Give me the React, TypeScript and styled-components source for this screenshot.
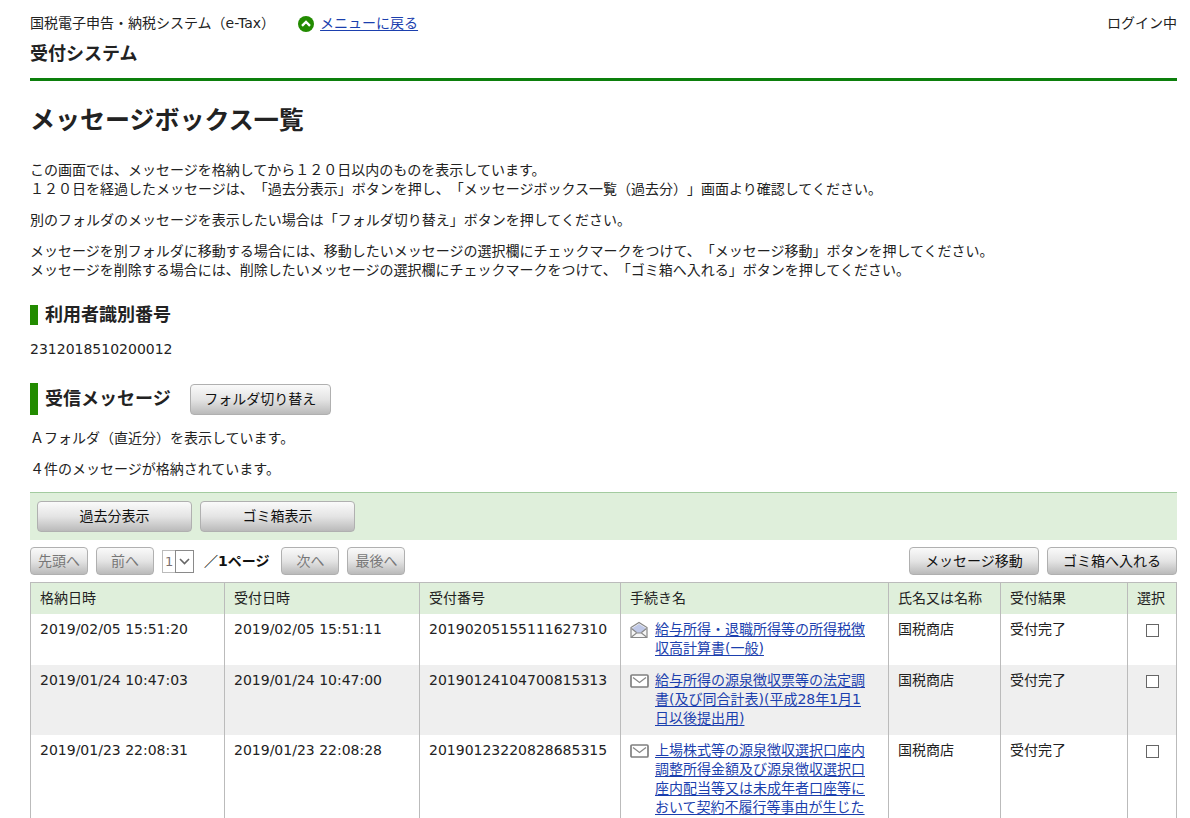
import React from "react";
import styled, { createGlobalStyle } from "styled-components";

const GlobalStyle = createGlobalStyle`
  *, *::before, *::after { box-sizing: border-box; }
  body {
    margin: 0;
    background: #fff;
    color: #222;
    font-family: "DejaVu Sans", "Noto Sans CJK JP", sans-serif;
    font-size: 14px;
    line-height: 19px;
    text-spacing-trim: space-all;
  }
  button, input, select { font: inherit; margin: 0; }
  h1, h2, p { margin: 0; }
`;

const Page = styled.div`
  padding: 14px 13px 0 30px;
`;

const Header = styled.header`
  border-bottom: 3px solid #0c7f0c;
  padding-bottom: 12px;
`;

const HeaderTop = styled.div`
  display: flex;
  align-items: center;
  gap: 23px;
  margin-bottom: 9px;
`;

const LoginState = styled.span`
  margin-left: auto;
`;

const Link = styled.a`
  color: #1b3fae;
  text-decoration: underline;
  text-underline-offset: 2px;
`;

const MenuLink = styled(Link)`
  display: flex;
  align-items: center;
  gap: 6px;
`;

const SystemName = styled.p`
  font-size: 18px;
  line-height: 24px;
  font-weight: bold;
`;

const Title = styled.h1`
  margin: 22px 0;
  font-size: 25px;
  line-height: 36px;
`;

const Paragraph = styled.p`
  margin-bottom: 12px;
`;

const SectionHead = styled.div<{ $tall?: boolean }>`
  display: flex;
  align-items: center;
  gap: 19px;
  min-height: ${(p) => (p.$tall ? 32 : 20)}px;
  padding-left: 7px;
  border-left: 8px solid #228b00;
  margin: ${(p) => (p.$tall ? "24px 0 14px" : "25px 0 15px")};
`;

const SectionTitle = styled.h2`
  font-size: 18px;
  line-height: 20px;
`;

const Button = styled.button<{ $size: "wide" | "folder" | "action" | "pager" }>`
  width: ${(p) => ({ wide: 155, folder: 141, action: 130, pager: 58 })[p.$size]}px;
  height: ${(p) => (p.$size === "wide" || p.$size === "folder" ? 31 : 28)}px;
  padding: 0;
  border: 1px solid #b0b0b0;
  border-radius: 4px;
  background: linear-gradient(#fafafa, #e4e4e4 50%, #bababa);
  color: #111;
  white-space: nowrap;

  &:disabled { color: #777; }
`;

const FolderBar = styled.div`
  display: flex;
  gap: 8px;
  padding: 8px 7px;
  margin-top: 13px;
  border-top: 1px solid #a3cba0;
  background: #dfefdb;
`;

const Toolbar = styled.div`
  display: flex;
  align-items: center;
  justify-content: space-between;
  padding: 7px 0;
`;

const Group = styled.div`
  display: flex;
  align-items: center;
  gap: 8px;
`;

const PageLabel = styled.label`
  display: flex;
  align-items: center;
  gap: 10px;
  margin-right: 4px;
  font-weight: bold;
  color: #111;
`;

const SelectBox = styled.span`
  position: relative;
  display: block;
  width: 32px;
  height: 23px;
`;

const PageSelect = styled.select`
  appearance: none;
  width: 100%;
  height: 100%;
  padding: 0 0 0 2px;
  border: 1px solid #bbb;
  border-radius: 0;
  background: #fff;
  color: #7a7070;
  font-size: 13px;
  font-weight: normal;
  opacity: 1;
`;

const SelectArrow = styled.span`
  position: absolute;
  top: 0;
  right: 0;
  bottom: 0;
  width: 19px;
  display: flex;
  align-items: center;
  justify-content: center;
  border: 1px solid #8a8a8a;
  background: #fff;
  pointer-events: none;
`;

const Table = styled.table`
  width: 100%;
  table-layout: fixed;
  border-collapse: collapse;
  border: 1px solid #bbb;
`;

const HeadCell = styled.th`
  padding: 6px 9px;
  border-right: 1px solid #bbb;
  background: #dfefdb;
  text-align: left;
  font-weight: normal;
  white-space: nowrap;
`;

const Row = styled.tr`
  &:nth-child(even) { background: #efefef; }
`;

const Cell = styled.td`
  padding: 6px 9px 7px;
  border-right: 1px solid #bbb;
  vertical-align: top;
`;

const CheckCell = styled(Cell)`
  text-align: center;
`;

const Procedure = styled.div`
  display: flex;
  align-items: flex-start;
  gap: 5px;
  padding-right: 7px;
`;

const IconSlot = styled.span`
  flex: none;
  display: flex;
  align-items: center;
  height: 19px;
`;

const Checkbox = styled.input`
  appearance: none;
  display: block;
  width: 13px;
  height: 13px;
  margin: 4px auto 0;
  border: 1px solid #666;
  background: #fff;

  &:checked { background: #228b00; }
`;

const UpIcon = () => (
  <svg width="16" height="16" viewBox="0 0 16 16" aria-hidden="true">
    <circle cx="8" cy="8" r="8" fill="#228b00" />
    <path d="M4 9.800 8 6l4 3.800" fill="none" stroke="#fff" strokeWidth="2.400" />
  </svg>
);

const OpenMail = () => (
  <svg width="20" height="18" viewBox="0 0 20 18" aria-hidden="true">
    <path d="M1 6.500 9 1.500l8 5V16.500H1z" fill="#f6f6f6" stroke="#888" strokeWidth="1.200" />
    <path d="M2.500 7 9 3l6.500 4v1.500L11 12H7L2.500 8.500z" fill="#c0c9e8" />
    <path d="M1.500 7.500 6.500 11.500M16.500 7.500 11.500 11.500M1.500 16 6.500 12h5l5 4" fill="none" stroke="#888" strokeWidth="1.200" />
  </svg>
);

const ClosedMail = () => (
  <svg width="20" height="14" viewBox="0 0 20 14" aria-hidden="true">
    <rect x="1" y="1" width="17" height="12" rx="1" fill="#fff" stroke="#808080" strokeWidth="1.700" />
    <path d="M3 3.500 9.500 8.500 16 3.500" fill="none" stroke="#888" strokeWidth="1.300" />
  </svg>
);

const messages = [
  {
    stored: "2019/02/05 15:51:20",
    received: "2019/02/05 15:51:11",
    number: "20190205155111627310",
    opened: true,
    procedure: "給与所得・退職所得等の所得税徴収高計算書(一般)",
  },
  {
    stored: "2019/01/24 10:47:03",
    received: "2019/01/24 10:47:00",
    number: "20190124104700815313",
    opened: false,
    procedure: "給与所得の源泉徴収票等の法定調書(及び同合計表)(平成28年1月1日以後提出用)",
  },
  {
    stored: "2019/01/23 22:08:31",
    received: "2019/01/23 22:08:28",
    number: "20190123220828685315",
    opened: false,
    procedure:
      "上場株式等の源泉徴収選択口座内調整所得金額及び源泉徴収選択口座内配当等又は未成年者口座等において契約不履行等事由が生じた",
  },
];

const columns: { label: string; width?: number }[] = [
  { label: "格納日時", width: 194 },
  { label: "受付日時", width: 195 },
  { label: "受付番号", width: 201 },
  { label: "手続き名" },
  { label: "氏名又は名称", width: 112 },
  { label: "受付結果", width: 127 },
  { label: "選択", width: 49 },
];

export default function App() {
  return (
    <>
      <GlobalStyle />
      <Page>
        <Header>
          <HeaderTop>
            <span>国税電子申告・納税システム（e-Tax）</span>
            <MenuLink href="#menu">
              <UpIcon />
              メニューに戻る
            </MenuLink>
            <LoginState>ログイン中</LoginState>
          </HeaderTop>
          <SystemName>受付システム</SystemName>
        </Header>
        <main>
          <Title>メッセージボックス一覧</Title>
          <Paragraph>
            この画面では、メッセージを格納してから１２０日以内のものを表示しています。
            <br />
            １２０日を経過したメッセージは、「過去分表示」ボタンを押し、「メッセージボックス一覧（過去分）」画面より確認してください。
          </Paragraph>
          <Paragraph>
            別のフォルダのメッセージを表示したい場合は「フォルダ切り替え」ボタンを押してください。
          </Paragraph>
          <Paragraph>
            メッセージを別フォルダに移動する場合には、移動したいメッセージの選択欄にチェックマークをつけて、「メッセージ移動」ボタンを押してください。
            <br />
            メッセージを削除する場合には、削除したいメッセージの選択欄にチェックマークをつけて、「ゴミ箱へ入れる」ボタンを押してください。
          </Paragraph>
          <SectionHead>
            <SectionTitle>利用者識別番号</SectionTitle>
          </SectionHead>
          <p>2312018510200012</p>
          <SectionHead $tall>
            <SectionTitle>受信メッセージ</SectionTitle>
            <Button type="button" $size="folder">フォルダ切り替え</Button>
          </SectionHead>
          <Paragraph>Ａフォルダ（直近分）を表示しています。</Paragraph>
          <Paragraph>４件のメッセージが格納されています。</Paragraph>
          <FolderBar>
            <Button type="button" $size="wide">過去分表示</Button>
            <Button type="button" $size="wide">ゴミ箱表示</Button>
          </FolderBar>
          <Toolbar>
            <Group>
              <Button type="button" $size="pager" disabled>先頭へ</Button>
              <Button type="button" $size="pager" disabled>前へ</Button>
              <PageLabel>
                <SelectBox>
                  <PageSelect disabled defaultValue="1">
                    <option>1</option>
                  </PageSelect>
                  <SelectArrow>
                    <svg width="11" height="7" viewBox="0 0 11 7" aria-hidden="true">
                      <path d="M1 1l4.500 4.500L10 1" fill="none" stroke="#666" strokeWidth="1.600" />
                    </svg>
                  </SelectArrow>
                </SelectBox>
                ／1ページ
              </PageLabel>
              <Button type="button" $size="pager" disabled>次へ</Button>
              <Button type="button" $size="pager" disabled>最後へ</Button>
            </Group>
            <Group>
              <Button type="button" $size="action">メッセージ移動</Button>
              <Button type="button" $size="action">ゴミ箱へ入れる</Button>
            </Group>
          </Toolbar>
          <Table>
            <colgroup>
              {columns.map((c) => (
                <col key={c.label} width={c.width} />
              ))}
            </colgroup>
            <thead>
              <tr>
                {columns.map((c) => (
                  <HeadCell key={c.label} scope="col">{c.label}</HeadCell>
                ))}
              </tr>
            </thead>
            <tbody>
              {messages.map((m) => (
                <Row key={m.number}>
                  <Cell>{m.stored}</Cell>
                  <Cell>{m.received}</Cell>
                  <Cell>{m.number}</Cell>
                  <Cell>
                    <Procedure>
                      <IconSlot>{m.opened ? <OpenMail /> : <ClosedMail />}</IconSlot>
                      <Link href={"#" + m.number}>{m.procedure}</Link>
                    </Procedure>
                  </Cell>
                  <Cell>国税商店</Cell>
                  <Cell>受付完了</Cell>
                  <CheckCell>
                    <Checkbox type="checkbox" aria-label={m.procedure + " 選択"} />
                  </CheckCell>
                </Row>
              ))}
            </tbody>
          </Table>
        </main>
      </Page>
    </>
  );
}
